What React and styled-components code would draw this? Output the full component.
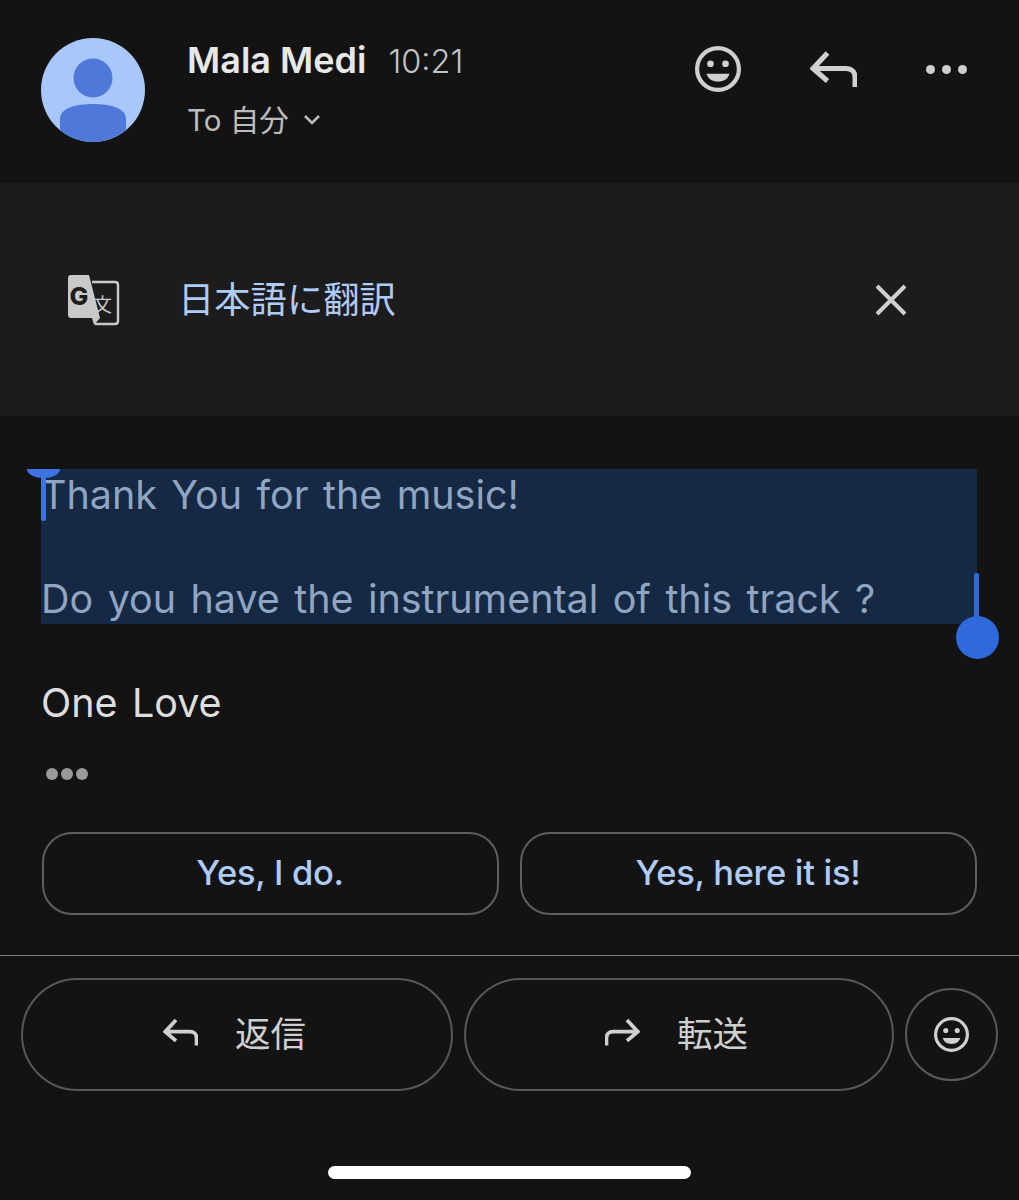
import React from 'react'
import styled, { createGlobalStyle } from 'styled-components'

const GlobalStyle = createGlobalStyle`
  html, body {
    margin: 0;
    padding: 0;
    background: #131314;
  }
  * {
    box-sizing: border-box;
  }
`

const FONT = `Inter, "Noto Sans CJK JP", sans-serif`

const SmileIcon = ({ size }) => (
  <svg width={size} height={size} viewBox="0 0 44 44">
    <circle cx="22" cy="22" r="20" fill="none" stroke="#d0d0d0" strokeWidth="4" />
    <circle cx="14.8" cy="17" r="3.2" fill="#d0d0d0" />
    <circle cx="29.2" cy="17" r="3.2" fill="#d0d0d0" />
    <path d="M11 26.5 H33 C31.5 31.5 27.5 34 22 34 C16.5 34 12.5 31.5 11 26.5 Z" fill="#d0d0d0" />
  </svg>
)

const ReplyIcon = ({ width, height }) => (
  <svg width={width} height={height} viewBox="0 0 47 36">
    <path d="M17.5 2 L3 17.5 L17.5 30 M3 17.5 H36 C41.5 17.5 45 21 45 26 V36" fill="none" stroke="#d0d0d0" strokeWidth="5" />
  </svg>
)

const ForwardIcon = () => (
  <svg width="35" height="28" viewBox="0 0 47 36">
    <path d="M29.5 2 L44 17.5 L29.5 30 M44 17.5 H11 C5.5 17.5 2 21 2 26 V36" fill="none" stroke="#d0d0d0" strokeWidth="5" />
  </svg>
)

const TranslateIcon = () => (
  <svg width="52" height="52" viewBox="0 0 52 52">
    <path d="M24 8 H47 C49 8 50 9 50 11 V47 C50 49 49 50 47 50 H27" fill="#1c1c1c" stroke="#c9c9c9" strokeWidth="2.4" />
    <path d="M3 1 H21 L32 44 H3 C1 44 0 43 0 41 V4 C0 2 1 1 3 1 Z" fill="#c9c9c9" />
    <path d="M24 44 H32 L26 51 Z" fill="#c9c9c9" />
    <text x="1.5" y="31" fontFamily="Inter, sans-serif" fontWeight="800" fontSize="25" fill="#1c1c1c">G</text>
    <text x="25" y="38" fontFamily={'"Noto Sans CJK JP", sans-serif'} fontSize="19" fill="#c9c9c9">文</text>
  </svg>
)

const Screen = styled.div`
  width: 1019px;
  height: 1200px;
  background: #131314;
  font-family: ${FONT};
  overflow: hidden;
`

const Header = styled.header`
  height: 183px;
  display: flex;
  align-items: flex-start;
  padding: 38px 52px 0 41px;
`

const Avatar = styled.svg`
  width: 104px;
  height: 104px;
  flex: none;
`

const SenderInfo = styled.div`
  margin-left: 42px;
  flex: 1;
`

const NameRow = styled.div`
  display: flex;
  align-items: baseline;
  gap: 22px;
  line-height: 44px;
`

const Name = styled.span`
  color: #e8e8e8;
  font-size: 36px;
  font-weight: 600;
`

const Time = styled.span`
  color: #c4c4c4;
  font-size: 32.5px;
  font-weight: 300;
`

const ToRow = styled.div`
  display: flex;
  align-items: center;
  gap: 14px;
  margin-top: 14px;
  color: #bdbdbd;
  font-size: 29.5px;
  line-height: 44px;
`

const HeaderActions = styled.div`
  display: flex;
  align-items: center;
  gap: 69px;
  height: 62px;
`

const MoreDots = styled.div`
  display: flex;
  gap: 7px;
`

const Dot = styled.span`
  width: ${(p) => p.$size}px;
  height: ${(p) => p.$size}px;
  border-radius: 50%;
  background: ${(p) => p.$color};
`

const TranslateBar = styled.section`
  height: 233px;
  background: #1c1c1c;
  display: flex;
  align-items: center;
  padding: 0 112px 0 68px;
`

const TranslateLabel = styled.span`
  flex: 1;
  margin-left: 58px;
  color: #aecbfa;
  font-size: 36.3px;
  line-height: 48px;
`

const Message = styled.div`
  padding: 53px 42px 0 41px;
`

const Selection = styled.div`
  position: relative;
  background: #152944;
  height: 155px;
  width: 936px;
`

const Line = styled.p`
  margin: 0;
  height: 52px;
  color: ${(p) => (p.$selected ? '#8fa5c2' : '#dedede')};
  font-size: 39.5px;
  font-weight: 380;
  letter-spacing: -0.05px;
  line-height: 52px;
  word-spacing: 3.5px;
  white-space: nowrap;
`

const CursorStem = styled.div`
  position: absolute;
  left: 0;
  top: 0;
  width: 5px;
  height: 52px;
  border-radius: 2px;
  background: #3d72e4;
`

const CursorCap = styled.div`
  position: absolute;
  left: -14px;
  top: 0;
  width: 33px;
  height: 9px;
  border-radius: 0 0 17px 17px / 0 0 9px 9px;
  background: #3d72e4;
`

const EndStem = styled.div`
  position: absolute;
  right: -2px;
  top: 104px;
  width: 5px;
  height: 50px;
  border-radius: 2px;
  background: #3069dc;
`

const EndKnob = styled.div`
  position: absolute;
  right: -22px;
  top: 147px;
  width: 43px;
  height: 43px;
  border-radius: 50%;
  background: #3069dc;
`

const Signature = styled.div`
  margin-top: 53px;
`

const QuotedDots = styled.div`
  display: flex;
  gap: 3px;
  margin: 38px 0 0 5px;
  height: 14px;
  align-items: center;
`

const SmartReplies = styled.div`
  display: grid;
  grid-template-columns: 457px 457px;
  gap: 21px;
  margin: 51px 0 0 0.5px;
`

const SmartReply = styled.button`
  height: 83px;
  border: 2.5px solid #5e5e62;
  border-radius: 30px;
  background: transparent;
  color: #afcbf9;
  font-family: Inter, sans-serif;
  font-size: 34.5px;
  font-weight: 500;
  letter-spacing: -0.3px;
  padding: 0 0 2px;
`

const Divider = styled.hr`
  margin: 40px 0 0;
  border: 0;
  height: 1px;
  background: #7c7c7c;
`

const ActionRow = styled.div`
  display: flex;
  align-items: center;
  gap: 11px;
  padding: 22px 21px 0;
`

const ActionPill = styled.button`
  flex: none;
  width: ${(p) => p.$width}px;
  height: 113px;
  display: flex;
  align-items: center;
  justify-content: center;
  gap: 37px;
  border: 2.5px solid #58585a;
  border-radius: 57px;
  background: transparent;
  color: #cfcfcf;
  font-family: ${FONT};
  font-size: 35.5px;
  padding: 0 5px 6px 0;
`

const EmojiButton = styled.button`
  flex: none;
  width: 93px;
  height: 93px;
  display: flex;
  align-items: center;
  justify-content: center;
  border: 2.5px solid #58585a;
  border-radius: 50%;
  background: transparent;
  padding: 0;
`

const HomeBar = styled.div`
  width: 363px;
  height: 13px;
  margin: 75px 0 0 328px;
  border-radius: 7px;
  background: #ffffff;
`

const App = () => {
  return (
    <>
      <GlobalStyle />
      <Screen>
        <Header>
          <Avatar viewBox="0 0 104 104">
            <defs>
              <clipPath id="avatar-clip">
                <circle cx="52" cy="52" r="52" />
              </clipPath>
            </defs>
            <g clipPath="url(#avatar-clip)">
              <rect width="104" height="104" fill="#a8c7fa" />
              <circle cx="52" cy="40" r="19.5" fill="#4f78d9" />
              <path d="M19 104 V81 C19 70 35 66 52 66 C69 66 85 70 85 81 V104 Z" fill="#4f78d9" />
            </g>
          </Avatar>
          <SenderInfo>
            <NameRow>
              <Name>Mala Medi</Name>
              <Time>10:21</Time>
            </NameRow>
            <ToRow>
              <span>To 自分</span>
              <svg width="18" height="12" viewBox="0 0 18 12">
                <path d="M2 2 L9 9 L16 2" fill="none" stroke="#bdbdbd" strokeWidth="2.6" />
              </svg>
            </ToRow>
          </SenderInfo>
          <HeaderActions>
            <SmileIcon size={46} />
            <ReplyIcon width={47} height={36} />
            <MoreDots>
              <Dot $size={9} $color="#d0d0d0" />
              <Dot $size={9} $color="#d0d0d0" />
              <Dot $size={9} $color="#d0d0d0" />
            </MoreDots>
          </HeaderActions>
        </Header>

        <TranslateBar>
          <TranslateIcon />
          <TranslateLabel>日本語に翻訳</TranslateLabel>
          <svg width="32" height="32" viewBox="0 0 32 32">
            <path d="M2 2 L30 30 M30 2 L2 30" stroke="#d0d0d0" strokeWidth="4" />
          </svg>
        </TranslateBar>

        <Message>
          <Selection>
            <Line $selected>Thank You for the music!</Line>
            <Line />
            <Line $selected>Do you have the instrumental of this track ?</Line>
            <CursorCap />
            <CursorStem />
            <EndStem />
            <EndKnob />
          </Selection>
          <Signature>
            <Line>One Love</Line>
          </Signature>
          <QuotedDots>
            <Dot $size={12} $color="#9a9a9a" />
            <Dot $size={12} $color="#9a9a9a" />
            <Dot $size={12} $color="#9a9a9a" />
          </QuotedDots>
          <SmartReplies>
            <SmartReply>Yes, I do.</SmartReply>
            <SmartReply>Yes, here it is!</SmartReply>
          </SmartReplies>
        </Message>

        <Divider />

        <ActionRow>
          <ActionPill $width={432}>
            <ReplyIcon width={35} height={28} />
            <span>返信</span>
          </ActionPill>
          <ActionPill $width={430}>
            <ForwardIcon />
            <span>転送</span>
          </ActionPill>
          <EmojiButton>
            <SmileIcon size={35} />
          </EmojiButton>
        </ActionRow>

        <HomeBar />
      </Screen>
    </>
  )
}

export default App
